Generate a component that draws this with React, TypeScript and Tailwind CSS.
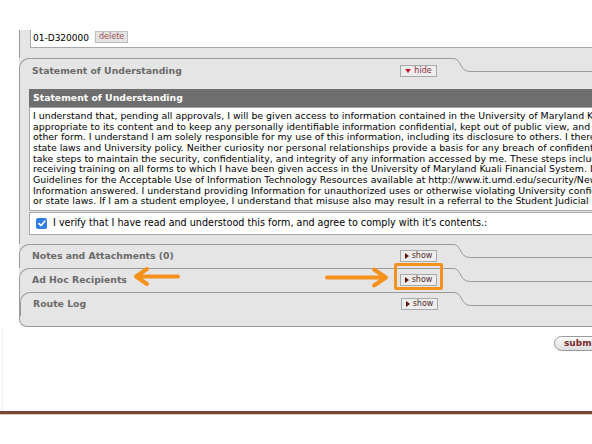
import React from "react";

const LINES = [
  "I understand that, pending all approvals, I will be given access to information contained in the University of Maryland Kuali",
  "appropriate to its content and to keep any personally identifiable information confidential, kept out of public view, and not",
  "other form. I understand I am solely responsible for my use of this information, including its disclosure to others. I therefore",
  "state laws and University policy. Neither curiosity nor personal relationships provide a basis for any breach of confidentiality",
  "take steps to maintain the security, confidentiality, and integrity of any information accessed by me. These steps include",
  "receiving training on all forms to which I have been given access in the University of Maryland Kuali Financial System. I",
  "Guidelines for the Acceptable Use of Information Technology Resources available at http://www.it.umd.edu/security/NewPolicy",
  "Information answered. I understand providing Information for unauthorized uses or otherwise violating University confidentiality",
  "or state laws. If I am a student employee, I understand that misuse also may result in a referral to the Student Judicial",
];

function ToggleButton({ open }: { open: boolean }) {
  return (
    <div className="flex h-[12px] w-[37px] items-center justify-center gap-[3px] border border-[#a9a9a9] bg-[#ededed] text-[8px] leading-none">
      {open ? (
        <svg width="6" height="4" viewBox="0 0 6 4">
          <path d="M0 0 L6 0 L3 4 Z" fill="#c8102e" />
        </svg>
      ) : (
        <svg width="4" height="6" viewBox="0 0 4 6">
          <path d="M0 0 L4 3 L0 6 Z" fill="#5a1414" />
        </svg>
      )}
      <span className={open ? "text-[#8a2b3b]" : "text-[#4d2b2b]"}>{open ? "hide" : "show"}</span>
    </div>
  );
}

function TabHeader({ title, open }: { title: string; open: boolean }) {
  return (
    <div className="flex h-[24px]">
      <div className="flex w-[434px] items-center rounded-tl-[10px] border-t border-l border-[#9a9a9a] pl-[12px] pr-[16px]">
        <span className="text-[9.3px] font-bold text-[#6a6a6a]">{title}</span>
        <div className="ml-auto">
          <ToggleButton open={open} />
        </div>
      </div>
      <svg width="17" height="24" viewBox="0 0 17 24" className="shrink-0">
        <path d="M0 0.5 C 9 0.5, 6 13.5, 17 13.5" fill="none" stroke="#9a9a9a" strokeWidth="1" />
      </svg>
      <div className="mt-[13px] flex-1 border-t border-[#9a9a9a]" />
    </div>
  );
}

export default function App() {
  return (
    <div className="relative h-[444px] w-[592px] overflow-hidden bg-white font-['DejaVu_Sans',sans-serif]">
      <div className="w-[660px] pt-[30px]">
        <div className="ml-[19px] rounded-bl-[8px] bg-[#e5e5e5]">
          {/* previous section tail */}
          <div className="h-[28px] border-l border-[#9a9a9a] pl-[10px]">
            <div className="flex h-[18px] items-center gap-[6px] border-b border-l border-[#a8a8a8] bg-white pl-[2px]">
              <span className="text-[9px] text-black">01-D320000</span>
              <span className="mt-[-4px] flex h-[12px] items-center border border-[#bdbdbd] bg-[#e4e4e4] px-[3px] text-[8px] leading-none text-[#a05252]">
                delete
              </span>
            </div>
          </div>

          {/* statement of understanding */}
          <TabHeader title="Statement of Understanding" open={true} />
          <div className="border-l border-[#9a9a9a] pt-[7px] pb-[9px] pl-[9px]">
            <div className="flex h-[18px] items-center bg-[#6e6e6e] pl-[4px] text-[9.3px] font-bold text-white">
              Statement of Understanding
            </div>
            <div className="border border-[#a8a8a8] bg-white py-[3px] pl-[3px] text-[9.4px] leading-[10.65px] text-black">
              {LINES.map((l) => (
                <div key={l} className="whitespace-nowrap">
                  {l}
                </div>
              ))}
            </div>
            <div className="mt-[1px] flex h-[23px] items-center gap-[6px] border border-[#a8a8a8] bg-white pl-[6px] text-[9.6px] text-black">
              <div className="flex h-[11px] w-[11px] items-center justify-center rounded-[2px] bg-[#2f7de6]">
                <svg width="8" height="7" viewBox="0 0 8 7">
                  <path d="M1 3.6 L3.1 5.6 L7 1" fill="none" stroke="white" strokeWidth="1.6" strokeLinecap="round" strokeLinejoin="round" />
                </svg>
              </div>
              <span className="whitespace-nowrap">
                I verify that I have read and understood this form, and agree to comply with it's contents.:
              </span>
            </div>
          </div>

          <TabHeader title="Notes and Attachments (0)" open={false} />
          <TabHeader title="Ad Hoc Recipients" open={false} />
          <div className="h-[35px] rounded-bl-[8px] border-b border-l border-[#9a9a9a]">
            <TabHeader title="Route Log" open={false} />
          </div>
        </div>

        <div className="ml-[2px] border-l border-[#efefef] pt-[9px] pb-[60px]">
          <div className="ml-[551px] flex h-[15px] w-[60px] items-center rounded-full border border-[#9a9a9a] bg-gradient-to-b from-white to-[#dcdcdc] pl-[9px] text-[9px] font-bold text-[#7a2c2c]">
            submit
          </div>
        </div>
        <div className="h-[3px] bg-[#7b4636]" />
        <div className="h-[1px] bg-[#dcc6be]" />
      </div>

      {/* annotations */}
      <div className="absolute left-[394px] top-[263px] h-[27px] w-[49px] rounded-[2px] border-[3px] border-[#f5921e]" />
      <svg className="absolute left-[324px] top-[266px]" width="68" height="24" viewBox="0 0 68 24">
        <path d="M3 11.5 H62 M50 3.5 L62 11.5 L50 19.5" fill="none" stroke="#f5921e" strokeWidth="4" strokeLinecap="round" strokeLinejoin="round" />
      </svg>
      <svg className="absolute left-[130px] top-[265px]" width="52" height="24" viewBox="0 0 52 24">
        <path d="M48 11.5 H6 M17 4 L6 11.5 L17 19" fill="none" stroke="#f5921e" strokeWidth="4" strokeLinecap="round" strokeLinejoin="round" />
      </svg>
    </div>
  );
}
